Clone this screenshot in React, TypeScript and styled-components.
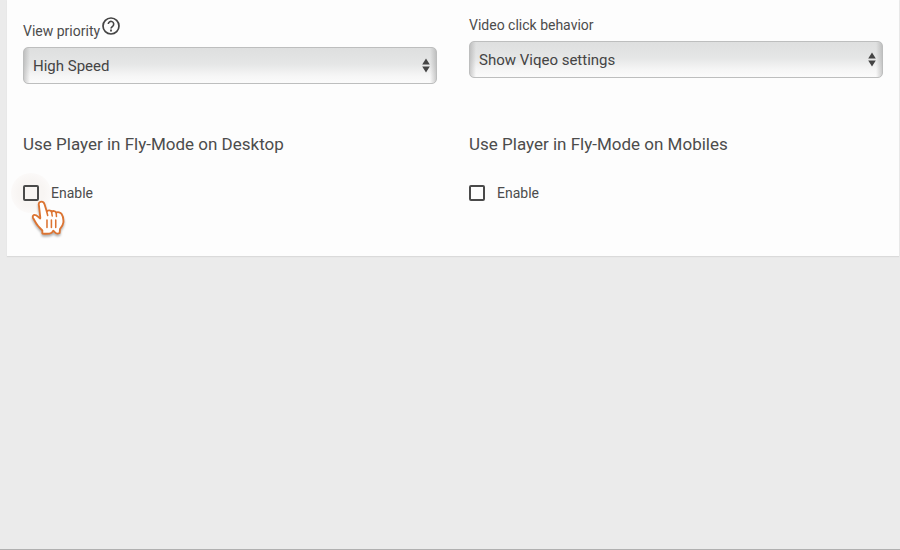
import React, { useId } from 'react';
import styled, { createGlobalStyle } from 'styled-components';

const GlobalStyle = createGlobalStyle`
  *, *::before, *::after { box-sizing: border-box; }
  body {
    margin: 0;
    background: #ebebeb;
    color: #4c4c4c;
    font-family: Roboto, "Liberation Sans", sans-serif;
  }
`;

const Page = styled.main`
  min-height: 100vh;
  padding: 0 1px 0 7px;
  border-bottom: 1px solid #b0b0b0;
`;

const Card = styled.form`
  padding: 15px 16px 53px;
  background: #fdfdfd;
  box-shadow: 0 1px 1px #dadada;
`;

const Columns = styled.div`
  display: grid;
  grid-template-columns: 1fr 1fr;
  column-gap: 32px;
  align-items: start;
`;

const FlyColumns = styled(Columns)`
  margin-top: 48px;
`;

const Field = styled.div`
  display: flex;
  flex-direction: column;
  gap: 6px;
`;

const LabelRow = styled.div<{ $tall?: boolean }>`
  display: flex;
  align-items: flex-end;
  gap: 2px;
  height: ${(p) => (p.$tall ? 26 : 20)}px;
`;

const Label = styled.label`
  font-size: 14px;
  line-height: 20px;
`;

const CheckLabel = styled(Label)`
  line-height: 22px;
`;

const HelpButton = styled.button`
  display: flex;
  align-self: flex-start;
  padding: 2px 0 0;
  border: 0;
  background: none;
  color: #444;
`;

const SelectBox = styled.div`
  display: grid;
  align-items: center;
  > * { grid-area: 1 / 1; }
`;

const Select = styled.select`
  appearance: none;
  width: 100%;
  height: 37px;
  padding: 0 28px 0 9px;
  border: 1px solid #bdbebe;
  border-radius: 5px;
  background:
    linear-gradient(90deg, rgba(160, 160, 160, 0.5), rgba(180, 180, 180, 0) 6px),
    linear-gradient(270deg, rgba(160, 160, 160, 0.5), rgba(180, 180, 180, 0) 6px),
    linear-gradient(#dedfdf, #e5e6e6 45%, #f6f6f6 80%, #fbfbfb);
  color: #444;
  font: 15px/20px Roboto, "Liberation Sans", sans-serif;
`;

const Arrows = styled.svg`
  justify-self: end;
  margin-right: 7px;
  pointer-events: none;
`;

const Heading = styled.h2`
  margin: 0 0 26px;
  font-size: 17px;
  font-weight: 400;
  line-height: 24px;
`;

const CheckRow = styled.div`
  display: flex;
  align-items: center;
  gap: 12px;
  height: 22px;
  margin-bottom: -1px;
`;

const CheckHolder = styled.div`
  position: relative;
  display: flex;
`;

const Checkbox = styled.input`
  appearance: none;
  position: relative;
  width: 16px;
  height: 16px;
  margin: 0;
  border: 2px solid #4a4a4a;
  border-radius: 2px;
  &:checked { background: #4a4a4a; }
`;

const Halo = styled.span`
  position: absolute;
  inset: -12px;
  border-radius: 50%;
  background: radial-gradient(#f8f5f3 45%, #fbf9f8 70%);
`;

const Pointer = styled.svg`
  position: absolute;
  left: 7px;
  top: 15px;
  z-index: 1;
  pointer-events: none;
  filter: drop-shadow(0 2px 1px rgba(0, 0, 0, 0.3));
`;

type SelectFieldProps = { label: string; value: string; help?: boolean };

function SelectField({ label, value, help }: SelectFieldProps) {
  const id = useId();
  return (
    <Field>
      <LabelRow $tall={help}>
        <Label htmlFor={id}>{label}</Label>
        {help && (
          <HelpButton type="button" aria-label="Help">
            <svg width="18" height="18" viewBox="0 0 18 18" fill="none" stroke="currentColor">
              <circle cx="9" cy="9" r="8" strokeWidth="1.7" />
              <path d="M6.3 7.1a2.7 2.7 0 1 1 4.5 2c-1 .8-1.8 1.3-1.8 2.5" strokeWidth="1.6" />
              <path d="M9 12.6v1.8" strokeWidth="1.8" />
            </svg>
          </HelpButton>
        )}
      </LabelRow>
      <SelectBox>
        <Select id={id} defaultValue={value}>
          <option>{value}</option>
        </Select>
        <Arrows width="8" height="15" viewBox="0 0 8 15" fill="#444" aria-hidden="true">
          <path d="M4 .5 7.8 6.500H.2zM.2 8.500h7.600L4 14.500z" />
        </Arrows>
      </SelectBox>
    </Field>
  );
}

function HandPointer() {
  return (
    <Pointer width="35" height="38" viewBox="0 0 34 38" preserveAspectRatio="none" aria-hidden="true">
      <path
        d="M12 33.5v-3C9.500 28 7 25.500 5.500 22.500L3 18c-.8-1.700.2-3.300 1.700-3.200 1.700 0 3 2 5.200 3.700L10 17.500 8.800 6.500 8.500 4.500C8.400 2.700 9.600 1.700 11.200 1.700s2.400 1 2.900 2.600l2.200 7.200c.7-1.500 4-1.500 4.600.3 1.200-1.300 4-1 4.500.900 1.500-1 4.300-.3 5.300 1.300 1.600 2.500 2 5.500 1.700 8.500-.2 2.500-1.700 4.500-3.300 6.500l-.3 4c-1.600.9-3.600.6-4.700-.8l-1.500-1.500-1.500 2c-2 1.200-5.800 1.200-9.100.8z"
        fill="#fff"
        stroke="#dc7432"
        strokeWidth="1.8"
        strokeLinejoin="round"
      />
      <path
        d="M16.200 11.500l1 4M21 12l.6 4M25.500 13.500l.2 3M16.500 20v7.500M20.800 20v7.500M25 20v7.500"
        fill="none"
        stroke="#dc7432"
        strokeWidth="1.5"
        strokeLinecap="round"
      />
    </Pointer>
  );
}

function FlyMode({ title, pointed }: { title: string; pointed?: boolean }) {
  const id = useId();
  return (
    <section>
      <Heading>{title}</Heading>
      <CheckRow>
        <CheckHolder>
          {pointed && <Halo />}
          <Checkbox id={id} type="checkbox" />
          {pointed && <HandPointer />}
        </CheckHolder>
        <CheckLabel htmlFor={id}>Enable</CheckLabel>
      </CheckRow>
    </section>
  );
}

export default function App() {
  return (
    <>
      <GlobalStyle />
      <Page>
        <Card>
          <Columns>
            <SelectField label="View priority" value="High Speed" help />
            <SelectField label="Video click behavior" value="Show Viqeo settings" />
          </Columns>
          <FlyColumns>
            <FlyMode title="Use Player in Fly-Mode on Desktop" pointed />
            <FlyMode title="Use Player in Fly-Mode on Mobiles" />
          </FlyColumns>
        </Card>
      </Page>
    </>
  );
}
